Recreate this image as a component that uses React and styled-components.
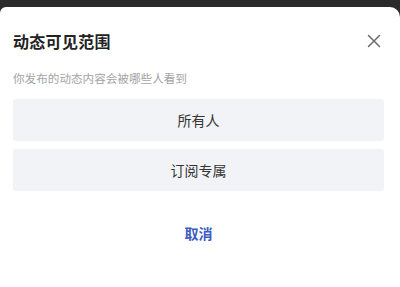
import React from 'react';
import styled, { createGlobalStyle } from 'styled-components';

const GlobalStyle = createGlobalStyle`
  html, body {
    margin: 0;
    padding: 0;
    background: #2b2b2b;
  }
  body {
    font-family: "Noto Sans CJK SC", "Noto Sans", sans-serif;
  }
`;

const Screen = styled.div`
  width: 400px;
  height: 287px;
  padding-top: 7px;
  box-sizing: border-box;
  background: #2b2b2b;
  overflow: hidden;
`;

const Sheet = styled.div`
  height: 100%;
  background: #ffffff;
  border-radius: 6px 10px 0 0;
  padding: 0 16px 0 13px;
  box-sizing: border-box;
  display: flex;
  flex-direction: column;
`;

const Header = styled.div`
  display: flex;
  align-items: center;
  justify-content: space-between;
  padding-top: 22px;
  height: 24px;
`;

const Title = styled.div`
  font-size: 16px;
  font-weight: 600;
  color: #222222;
  letter-spacing: 0.3px;
  line-height: 24px;
`;

const Close = styled.button`
  border: none;
  background: none;
  padding: 0;
  margin-right: 3px;
  width: 14px;
  height: 14px;
  display: flex;
  cursor: pointer;
`;

const Subtitle = styled.div`
  margin-top: 17px;
  font-size: 11.6px;
  color: #a3a3a3;
  line-height: 16px;
`;

const Options = styled.div`
  margin-top: 13px;
  display: flex;
  flex-direction: column;
  gap: 8px;
`;

const Option = styled.button`
  height: 42px;
  border: none;
  border-radius: 3px;
  background: #f2f3f6;
  font-family: inherit;
  font-size: 14px;
  color: #333333;
  cursor: pointer;
`;

const Cancel = styled.button`
  margin: 31px auto 0;
  border: none;
  background: none;
  font-family: inherit;
  font-size: 14px;
  font-weight: 600;
  color: #3d5bbf;
  cursor: pointer;
`;

export default function App() {
  return (
    <>
      <GlobalStyle />
      <Screen>
        <Sheet>
          <Header>
            <Title>动态可见范围</Title>
            <Close aria-label="关闭">
              <svg width="14" height="14" viewBox="0 0 14 14">
                <path d="M1.5 1.5 L12.5 12.5 M12.5 1.5 L1.5 12.5" stroke="#6a6a6a" strokeWidth="1.5" strokeLinecap="round" />
              </svg>
            </Close>
          </Header>
          <Subtitle>你发布的动态内容会被哪些人看到</Subtitle>
          <Options>
            <Option>所有人</Option>
            <Option>订阅专属</Option>
          </Options>
          <Cancel>取消</Cancel>
        </Sheet>
      </Screen>
    </>
  );
}
